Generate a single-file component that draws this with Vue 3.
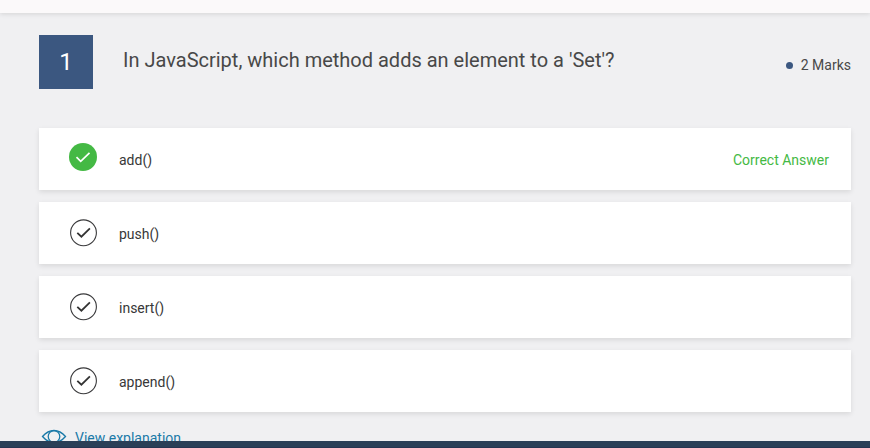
<script setup>
const options = [
  { text: 'add()', correct: true },
  { text: 'push()', correct: false },
  { text: 'insert()', correct: false },
  { text: 'append()', correct: false },
]
</script>

<template>
  <div class="page">
    <header class="topbar"></header>
    <main class="content">
      <section class="question">
        <div class="number">1</div>
        <h1 class="title">In JavaScript, which method adds an element to a 'Set'?</h1>
        <div class="marks"><i class="dot"></i><span>2 Marks</span></div>
      </section>
      <ul class="options">
        <li v-for="o in options" :key="o.text" class="option">
          <svg v-if="o.correct" class="icon" viewBox="0 0 30 62">
            <circle cx="15" cy="29" r="14" fill="#44b944" />
            <path d="M8.5 29.2L12.700 33.300L21.500 24.800" fill="none" stroke="#fff" stroke-width="1.7" />
          </svg>
          <svg v-else class="icon" viewBox="0 0 30 62">
            <circle cx="15.5" cy="30.8" r="12.9" fill="none" stroke="#3a3a3c" stroke-width="1.1" />
            <path d="M9.300 30.800L13.400 34.700L21.900 26.400" fill="none" stroke="#333" stroke-width="1.8" />
          </svg>
          <span class="label">{{ o.text }}</span>
          <span v-if="o.correct" class="correct">Correct Answer</span>
        </li>
      </ul>
      <a class="explain">
        <svg class="eye" viewBox="0 0 26 18" fill="none" stroke="#1a7aa8" stroke-width="1.3">
          <path d="M1.500 8.500C5 4.500 8.500 2.500 13 2.500s8 2 11.500 6C21 12.500 17.500 14.500 13 14.500S5 12.500 1.500 8.500Z" />
          <circle cx="13" cy="8.5" r="5.800" />
        </svg>
        <span>View explanation</span>
      </a>
    </main>
    <footer class="bottom"></footer>
  </div>
</template>

<style>
body {
  background: #f0f0f2;
}
</style>

<style scoped>
.page {
  height: 448px;
  display: flex;
  flex-direction: column;
  overflow: hidden;
  background: #f0f0f2;
  font-family: Roboto, "Liberation Sans", sans-serif;
  font-size: 14px;
  color: #383838;
}
.topbar {
  flex: none;
  height: 13px;
  background: #fbf9fa;
  box-shadow: 0 1px 5px rgba(0, 0, 0, 0.12);
}
.content {
  flex: 1;
  min-height: 0;
  padding: 22px 19px 0 39px;
}
.question {
  display: flex;
  height: 54px;
  margin-bottom: 39px;
}
.number {
  width: 54px;
  line-height: 54px;
  background: #3b5780;
  color: #fff;
  font-size: 24px;
  text-align: center;
}
.title {
  flex: 1;
  margin: 0 0 0 30px;
  font-size: 20px;
  font-weight: 400;
  line-height: 50px;
  color: #484848;
}
.marks {
  display: flex;
  align-items: center;
  gap: 8px;
  padding-top: 6px;
  color: #484848;
}
.dot {
  width: 7px;
  height: 7px;
  border-radius: 50%;
  background: #3b5780;
}
.options {
  display: flex;
  flex-direction: column;
  gap: 12px;
  margin: 0;
  padding: 0;
  list-style: none;
}
.option {
  display: flex;
  height: 62px;
  padding: 0 22px 0 29px;
  background: #fff;
  box-shadow: 0 2px 5px rgba(0, 0, 0, 0.1);
  line-height: 64px;
}
.icon {
  width: 30px;
  height: 62px;
  margin-right: 21px;
}
.label {
  flex: 1;
}
.correct {
  color: #44b944;
}
.explain {
  display: flex;
  gap: 8px;
  padding: 16px 0 0 2px;
  color: #1a7aa8;
  line-height: 20px;
}
.eye {
  width: 26px;
  height: 18px;
}
.bottom {
  position: relative;
  flex: none;
  height: 6px;
  background: #2a3f57;
  border-bottom: 1px solid #263450;
}
</style>
